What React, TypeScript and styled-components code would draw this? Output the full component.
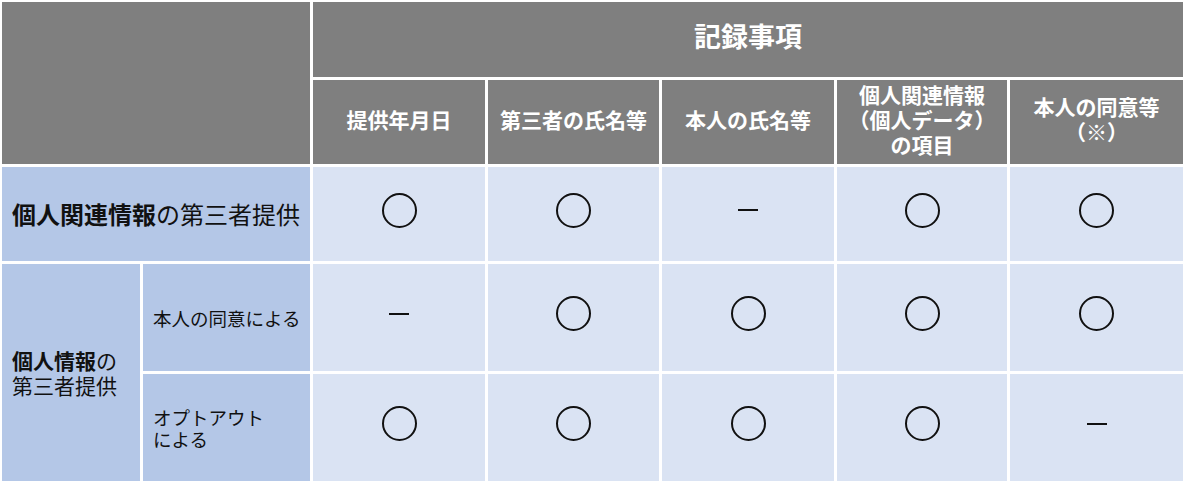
import React from 'react';
import styled, { createGlobalStyle } from 'styled-components';

const GlobalStyle = createGlobalStyle`
    html, body {
        margin: 0;
        padding: 0;
        background: #ffffff;
        font-family: 'Noto Sans CJK JP', 'Noto Sans', sans-serif;
    }
`;

type Mark = 'o' | '-';

const headers: string[][] = [
    ['提供年月日'],
    ['第三者の氏名等'],
    ['本人の氏名等'],
    ['個人関連情報', '（個人データ）', 'の項目'],
    ['本人の同意等', '（※）'],
];

const rowRelated: Mark[] = ['o', 'o', '-', 'o', 'o'];
const rowConsent: Mark[] = ['-', 'o', 'o', 'o', 'o'];
const rowOptOut: Mark[] = ['o', 'o', 'o', 'o', '-'];

const MarkCells = ({ marks }: { marks: Mark[] }): JSX.Element => (
    <>
        {marks.map((m, i) => (
            <BodyCell key={i}>{m === 'o' ? <Circle /> : <Dash />}</BodyCell>
        ))}
    </>
);

const App = (): JSX.Element => {
    return (
        <>
            <GlobalStyle />
            <Table>
                <HeadCell $colSpan={2} $rowSpan={2} />
                <HeadCell $colSpan={5}>
                    <Title>記録事項</Title>
                </HeadCell>
                {headers.map((lines) => (
                    <HeadCell key={lines.join('')}>
                        <SubHead>
                            {lines.map((l) => (
                                <span key={l}>{l}</span>
                            ))}
                        </SubHead>
                    </HeadCell>
                ))}

                <LabelCell $colSpan={2}>
                    <MainLabel>
                        <b>個人関連情報</b>の第三者提供
                    </MainLabel>
                </LabelCell>
                <MarkCells marks={rowRelated} />

                <LabelCell $rowSpan={2}>
                    <GroupLabel>
                        <span>
                            <b>個人情報</b>の
                        </span>
                        <span>第三者提供</span>
                    </GroupLabel>
                </LabelCell>
                <LabelCell>
                    <SubLabel>
                        <span>本人の同意による</span>
                    </SubLabel>
                </LabelCell>
                <MarkCells marks={rowConsent} />

                <LabelCell>
                    <SubLabel>
                        <span>オプトアウト</span>
                        <span>による</span>
                    </SubLabel>
                </LabelCell>
                <MarkCells marks={rowOptOut} />
            </Table>
        </>
    );
};

const Table = styled.div`
    display: grid;
    grid-template-columns: 138px 167px 172px 171px 172px 170px 173px;
    grid-template-rows: 75px 84px 94px 107px 107px;
    gap: 3px;
    margin: 2px;
    width: fit-content;
`;

interface SpanProps {
    $colSpan?: number;
    $rowSpan?: number;
}

const Cell = styled.div<SpanProps>`
    display: flex;
    align-items: center;
    grid-column: span ${({ $colSpan }) => $colSpan ?? 1};
    grid-row: span ${({ $rowSpan }) => $rowSpan ?? 1};
    min-width: 0;
    box-sizing: border-box;
`;

const HeadCell = styled(Cell)`
    justify-content: center;
    background: #7f7f7f;
    color: #ffffff;
    font-weight: 700;
    padding-bottom: 6px;
`;

const Title = styled.div`
    font-size: 27px;
    line-height: 32px;
    padding-bottom: 2px;
`;

const SubHead = styled.div`
    display: flex;
    flex-direction: column;
    align-items: center;
    font-size: 21px;
    line-height: 25px;
    white-space: nowrap;
`;

const LabelCell = styled(Cell)`
    background: #b4c7e7;
    color: #111111;
    padding-left: 10px;
`;

const MainLabel = styled.div`
    font-size: 24px;
    line-height: 30px;
    white-space: nowrap;
    b {
        font-weight: 700;
    }
`;

const GroupLabel = styled.div`
    display: flex;
    flex-direction: column;
    font-size: 21px;
    line-height: 25px;
    b {
        font-weight: 700;
    }
`;

const SubLabel = styled.div`
    display: flex;
    flex-direction: column;
    font-size: 18.5px;
    line-height: 22px;
`;

const BodyCell = styled(Cell)`
    justify-content: center;
    background: #dae3f3;
`;

const Circle = styled.div`
    width: 31px;
    height: 31px;
    border: 2px solid #111111;
    border-radius: 50%;
    margin-bottom: 8px;
`;

const Dash = styled.div`
    width: 20px;
    height: 2px;
    background: #111111;
    margin-bottom: 8px;
`;

export default App;
